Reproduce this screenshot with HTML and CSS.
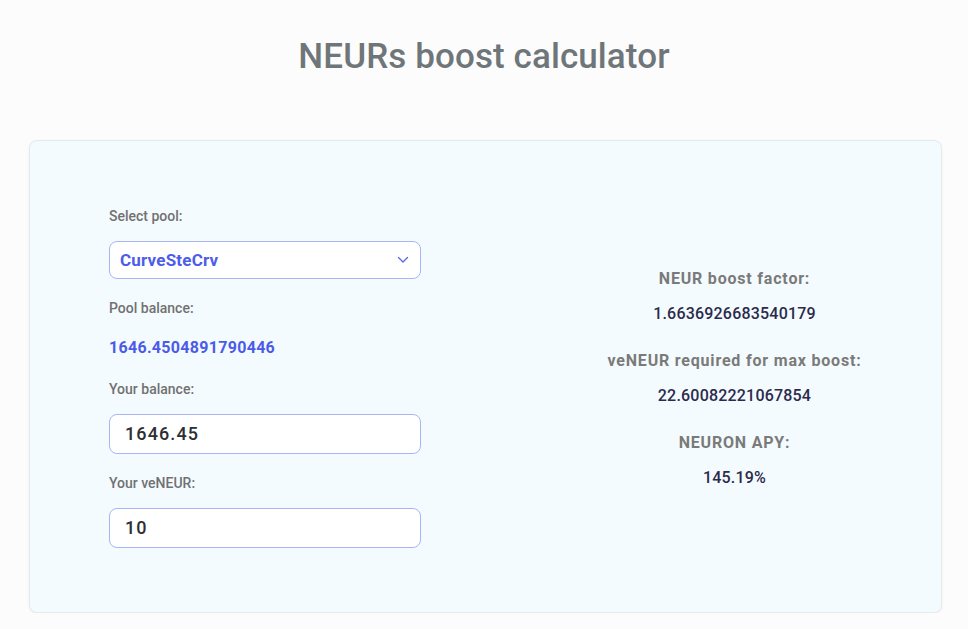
FILE: index.html
```html
<!DOCTYPE html>
<html>
<head>
<meta charset="utf-8">
<link rel="stylesheet" href="styles.css">
</head>
<body>
<h1 class="title">NEURs boost calculator</h1>
<div class="card">
  <div class="form">
    <div class="label first">Select pool:</div>
    <div class="select">
      <span class="select-text">CurveSteCrv</span>
      <svg class="chev" width="12" height="8" viewBox="0 0 12 8"><path d="M1.5 1.5 L6 6 L10.5 1.5" fill="none" stroke="#5a6ae8" stroke-width="1.4" stroke-linecap="round" stroke-linejoin="round"/></svg>
    </div>
    <div class="label after-select">Pool balance:</div>
    <div class="pool-value">1646.4504891790446</div>
    <div class="label after-value">Your balance:</div>
    <div class="input">1646.45</div>
    <div class="label after-input">Your veNEUR:</div>
    <div class="input">10</div>
  </div>
  <div class="results">
    <div class="r-label">NEUR boost factor:</div>
    <div class="r-value">1.6636926683540179</div>
    <div class="r-label">veNEUR required for max boost:</div>
    <div class="r-value">22.60082221067854</div>
    <div class="r-label">NEURON APY:</div>
    <div class="r-value">145.19%</div>
  </div>
</div>
</body>
</html>
```

FILE: styles.css
```css
html, body {
  margin: 0;
  padding: 0;
  background: #fcfcfd;
  font-family: Roboto, "Liberation Sans", sans-serif;
}
.title {
  margin: 37px 0 63px;
  text-align: center;
  font-size: 35px;
  line-height: 40px;
  font-weight: 500;
  letter-spacing: 0.1px;
  color: #6f7679;
}
.card {
  margin-left: 29px;
  height: 471px;
  width: 832px;
  box-sizing: content-box;
  border: 1px solid #e4eaee;
  border-radius: 8px;
  background: #f4fbfe;
  box-shadow: 0 1px 3px rgba(0,0,0,0.06);
  display: grid;
  grid-template-columns: 312px 1fr;
  column-gap: 107px;
  align-items: center;
  padding-left: 79px;
}
.form {
  display: flex;
  flex-direction: column;
  padding-top: 2px;
}
.label {
  font-size: 14px;
  line-height: 16px;
  font-weight: 500;
  color: #717171;
  margin-top: 0;
  margin-bottom: 17px;
}
.label.after-select { margin-top: 21px; margin-bottom: 23px; }
.label.after-value { margin-top: 24px; margin-bottom: 17px; }
.label.after-input { margin-top: 21px; margin-bottom: 17px; }
.select, .input {
  box-sizing: border-box;
  width: 312px;
  background: #ffffff;
  border: 1px solid #a8b5f6;
  border-radius: 8px;
  display: flex;
  align-items: center;
}
.select {
  height: 38px;
  padding: 0 11px 0 10px;
  justify-content: space-between;
}
.select-text {
  font-size: 17px;
  font-weight: 700;
  color: #4c5de9;
  letter-spacing: 0.2px;
}
.pool-value {
  font-size: 16px;
  line-height: 18px;
  font-weight: 700;
  color: #4b5be8;
  letter-spacing: 0.3px;
}
.input {
  height: 40px;
  padding-left: 15px;
  font-size: 18px;
  font-weight: 500;
  color: #2e2e33;
  letter-spacing: 1.1px;
}
.results {
  display: flex;
  flex-direction: column;
  align-items: center;
  padding-top: 4px;
}
.r-label {
  font-size: 16px;
  line-height: 20px;
  font-weight: 700;
  color: #7a7a7a;
  letter-spacing: 0.8px;
}
.r-value {
  font-size: 16px;
  line-height: 20px;
  font-weight: 500;
  color: #2b2a4c;
  margin-top: 15px;
  margin-bottom: 27px;
  letter-spacing: 0.2px;
}
.r-value:last-child { margin-bottom: 0; }
```
